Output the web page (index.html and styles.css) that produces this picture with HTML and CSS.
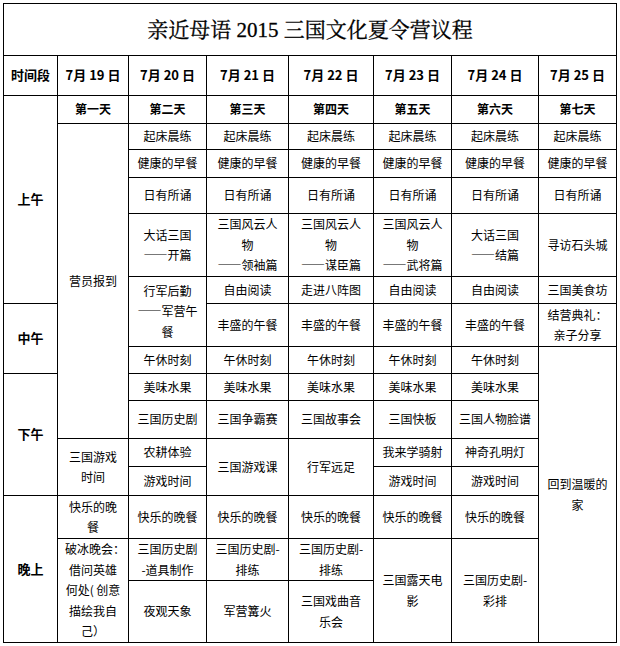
FILE: index.html
```html
<!DOCTYPE html>
<html lang="zh-CN">
<head>
<meta charset="utf-8">
<title>亲近母语 2015 三国文化夏令营议程</title>
<link rel="stylesheet" href="styles.css">
</head>
<body>
<table class="agenda">
  <colgroup>
    <col class="c0"><col class="c1"><col class="c2"><col class="c3"><col class="c4"><col class="c5"><col class="c6"><col class="c7">
  </colgroup>
  <tr class="r-title"><td class="title" colspan="8">亲近母语 2015 三国文化夏令营议程</td></tr>
  <tr class="r-head">
    <th>时间段</th><th>7月 19 日</th><th>7月 20 日</th><th>7月 21 日</th><th>7月 22 日</th><th>7月 23 日</th><th>7月 24 日</th><th>7月 25 日</th>
  </tr>
  <tr class="r-day">
    <td class="period" rowspan="6">上午</td>
    <td class="day">第一天</td><td class="day">第二天</td><td class="day">第三天</td><td class="day">第四天</td><td class="day">第五天</td><td class="day">第六天</td><td class="day">第七天</td>
  </tr>
  <tr class="r1">
    <td rowspan="9">营员报到</td>
    <td>起床晨练</td><td>起床晨练</td><td>起床晨练</td><td>起床晨练</td><td>起床晨练</td><td>起床晨练</td>
  </tr>
  <tr class="r2">
    <td>健康的早餐</td><td>健康的早餐</td><td>健康的早餐</td><td>健康的早餐</td><td>健康的早餐</td><td>健康的早餐</td>
  </tr>
  <tr class="r3">
    <td>日有所诵</td><td>日有所诵</td><td>日有所诵</td><td>日有所诵</td><td>日有所诵</td><td>日有所诵</td>
  </tr>
  <tr class="r4">
    <td>大话三国<br><span class="dash">——</span>开篇</td>
    <td>三国风云人<br>物<br><span class="dash">——</span>领袖篇</td>
    <td>三国风云人<br>物<br><span class="dash">——</span>谋臣篇</td>
    <td>三国风云人<br>物<br><span class="dash">——</span>武将篇</td>
    <td>大话三国<br><span class="dash">——</span>结篇</td>
    <td>寻访石头城</td>
  </tr>
  <tr class="r5">
    <td rowspan="2">行军后勤<br><span class="dash">——</span>军营午<br>餐</td>
    <td>自由阅读</td><td>走进八阵图</td><td>自由阅读</td><td>自由阅读</td><td>三国美食坊</td>
  </tr>
  <tr class="r6">
    <td class="period" rowspan="2">中午</td>
    <td>丰盛的午餐</td><td>丰盛的午餐</td><td>丰盛的午餐</td><td>丰盛的午餐</td>
    <td>结营典礼：<br>亲子分享</td>
  </tr>
  <tr class="r7">
    <td>午休时刻</td><td>午休时刻</td><td>午休时刻</td><td>午休时刻</td><td>午休时刻</td>
    <td rowspan="8">回到温暖的<br>家</td>
  </tr>
  <tr class="r8">
    <td class="period" rowspan="4">下午</td>
    <td>美味水果</td><td>美味水果</td><td>美味水果</td><td>美味水果</td><td>美味水果</td>
  </tr>
  <tr class="r9">
    <td>三国历史剧</td><td>三国争霸赛</td><td>三国故事会</td><td>三国快板</td><td>三国人物脸谱</td>
  </tr>
  <tr class="r10">
    <td rowspan="2">三国游戏<br>时间</td>
    <td>农耕体验</td>
    <td rowspan="2">三国游戏课</td>
    <td rowspan="2">行军远足</td>
    <td>我来学骑射</td><td>神奇孔明灯</td>
  </tr>
  <tr class="r11">
    <td>游戏时间</td><td>游戏时间</td><td>游戏时间</td>
  </tr>
  <tr class="r12">
    <td class="period" rowspan="3">晚上</td>
    <td>快乐的晚<br>餐</td>
    <td>快乐的晚餐</td><td>快乐的晚餐</td><td>快乐的晚餐</td><td>快乐的晚餐</td><td>快乐的晚餐</td>
  </tr>
  <tr class="r13">
    <td rowspan="2">破冰晚会：<br>借问英雄<br>何处( 创意<br>描绘我自<br>己）</td>
    <td>三国历史剧<br>-道具制作</td>
    <td>三国历史剧-<br>排练</td>
    <td>三国历史剧-<br>排练</td>
    <td rowspan="2">三国露天电<br>影</td>
    <td rowspan="2">三国历史剧-<br>彩排</td>
  </tr>
  <tr class="r14">
    <td>夜观天象</td><td>军营篝火</td><td>三国戏曲音<br>乐会</td>
  </tr>
</table>
</body>
</html>
```

FILE: styles.css
```css
html, body {
  margin: 0;
  padding: 0;
  background: #ffffff;
}

body {
  padding: 3px 0 0 3px;
  font-family: "Noto Sans CJK SC", "Noto Sans", sans-serif;
  color: #000000;
}

.agenda {
  border-collapse: collapse;
  table-layout: fixed;
  width: 614px;
}

.c0 { width: 54px; }
.c1 { width: 71px; }
.c2 { width: 78px; }
.c3 { width: 82px; }
.c4 { width: 85px; }
.c5 { width: 78px; }
.c6 { width: 87px; }
.c7 { width: 78px; }

.agenda td,
.agenda th {
  border: 1px solid #000000;
  padding: 0 7px;
  text-align: center;
  vertical-align: middle;
  font-size: 12px;
  line-height: 20.5px;
  white-space: nowrap;
  font-weight: normal;
}

.agenda .title {
  font-family: "Liberation Serif", "Noto Serif CJK SC", "Noto Sans CJK SC", serif;
  font-size: 21px;
  line-height: 24px;
  -webkit-text-stroke: 0.3px #000000;
}

.agenda th {
  font-size: 13px;
  font-weight: bold;
}

.agenda .period {
  font-size: 13px;
  font-weight: bold;
}

.agenda .day {
  font-weight: bold;
}

.dash {
  display: inline-block;
  width: 24px;
  letter-spacing: 0;
  font-feature-settings: "fwid";
  overflow: hidden;
  text-align: left;
  vertical-align: top;
}

.r-title { height: 52px; }
.r-head { height: 40px; }
.r-day { height: 28px; }
.r1 { height: 26px; }
.r2 { height: 28px; }
.r3 { height: 36px; }
.r4 { height: 63px; }
.r5 { height: 27px; }
.r6 { height: 43px; }
.r7 { height: 27px; }
.r8 { height: 27px; }
.r9 { height: 38px; }
.r10 { height: 28px; }
.r11 { height: 29px; }
.r12 { height: 43px; }
.r13 { height: 42px; }
.r14 { height: 62px; }
```
